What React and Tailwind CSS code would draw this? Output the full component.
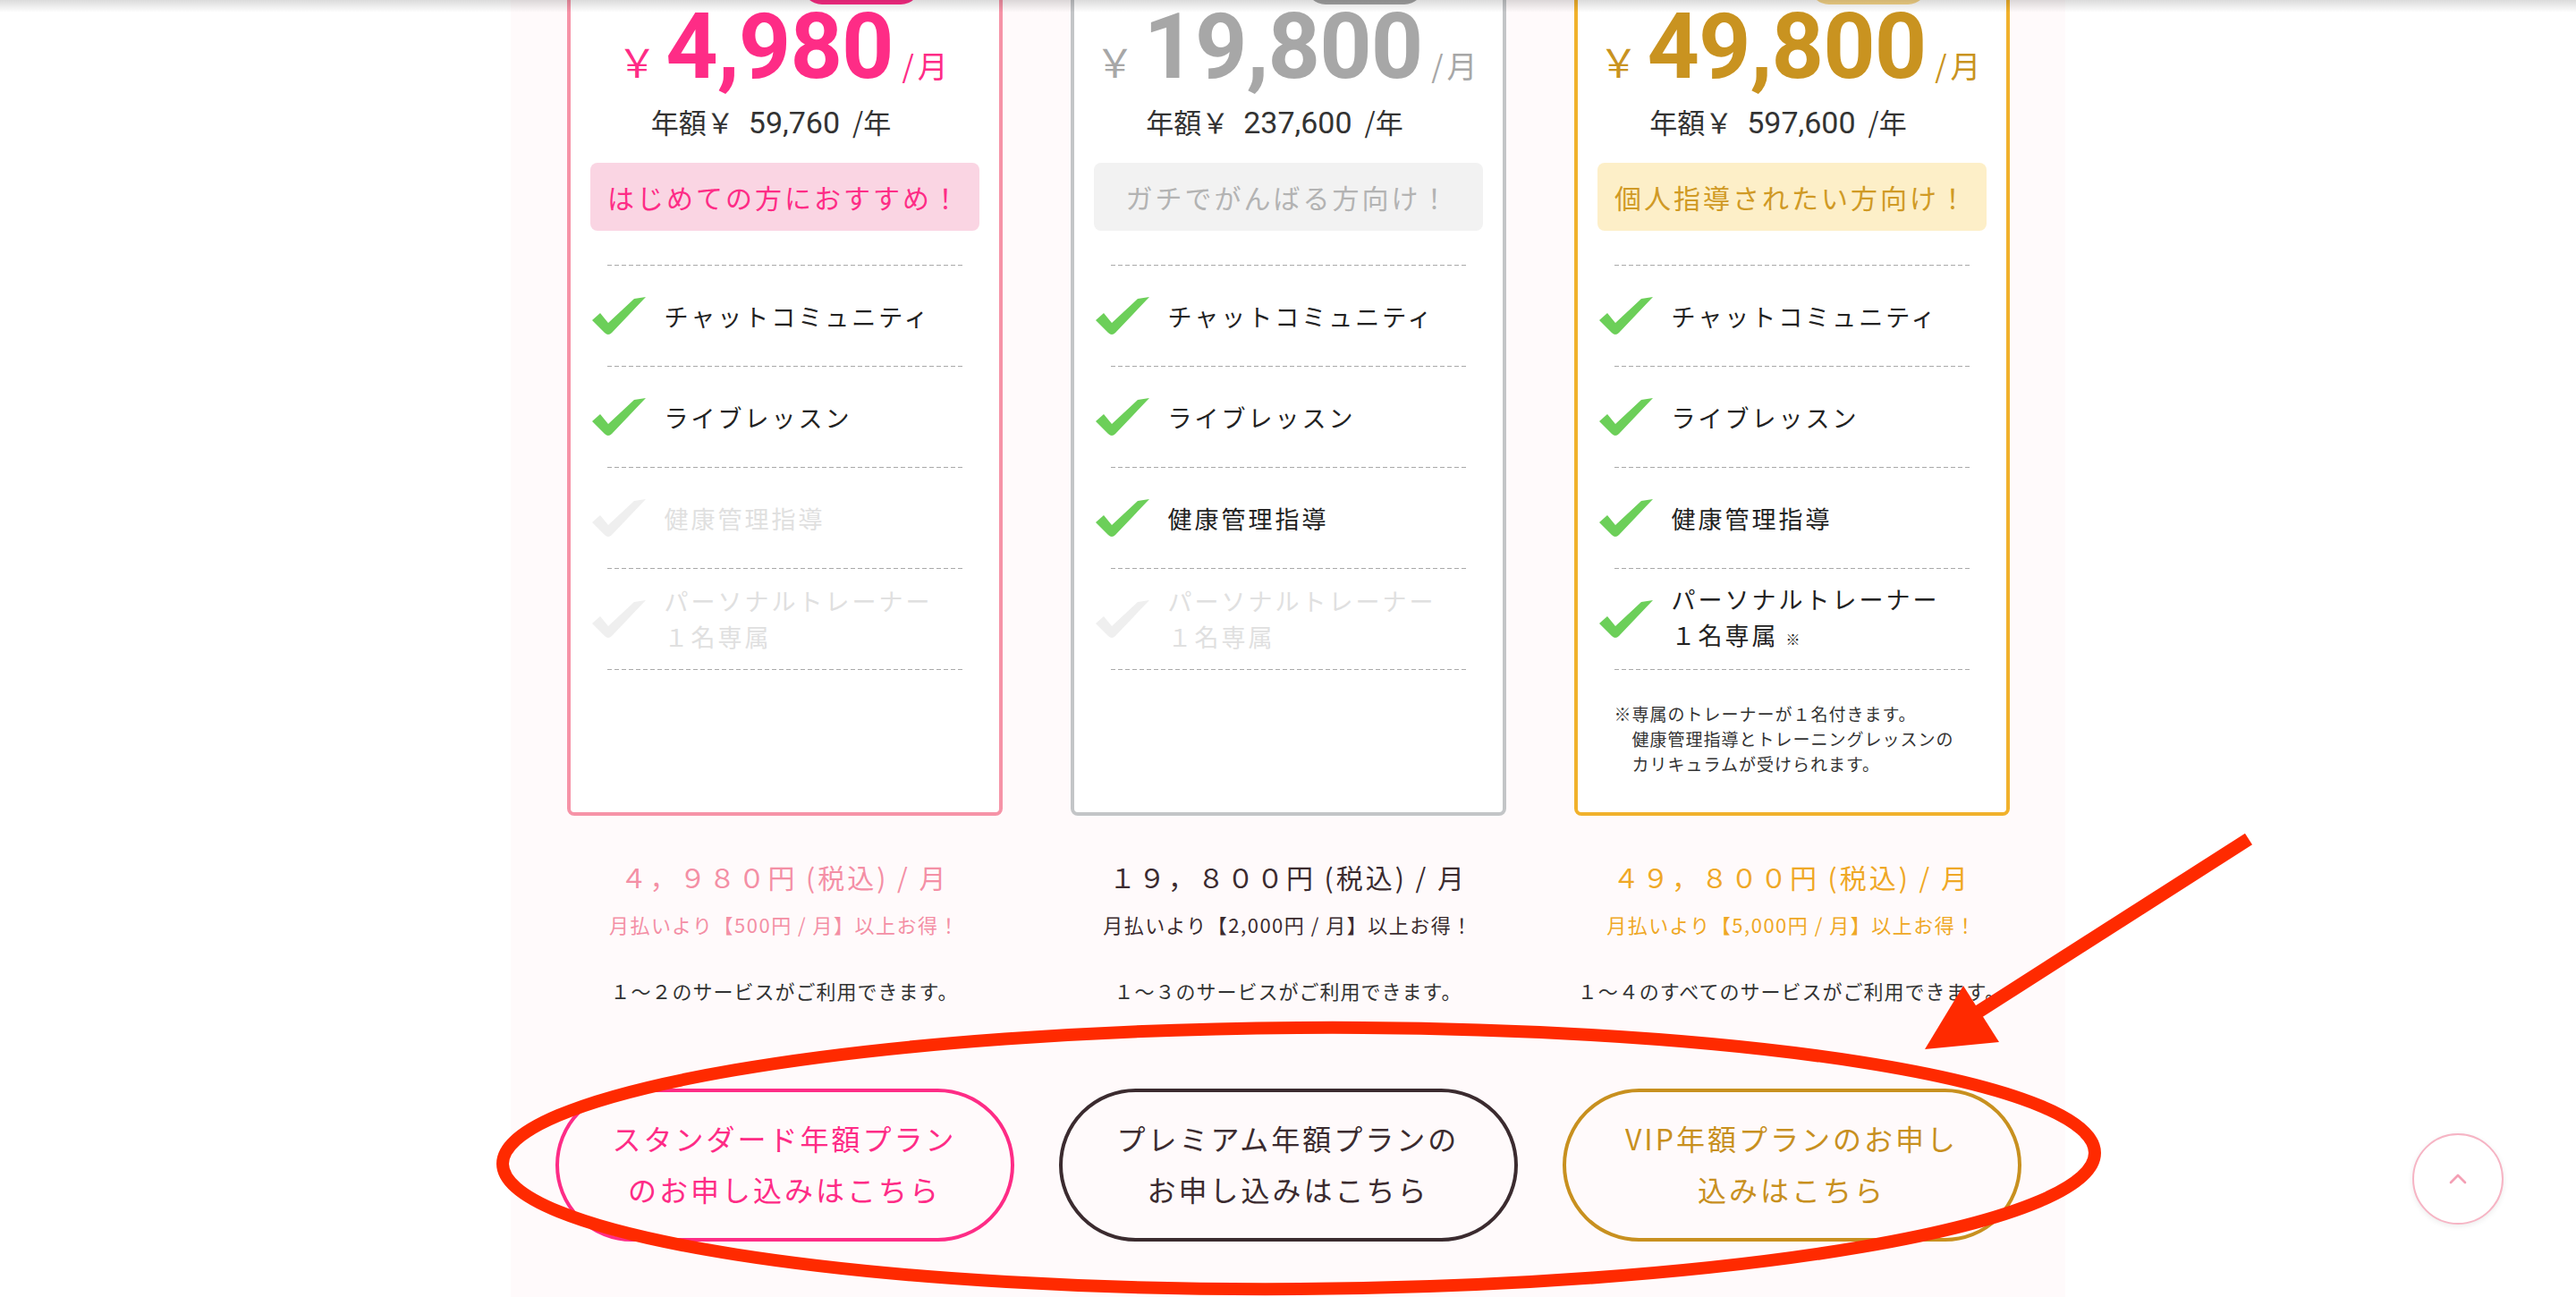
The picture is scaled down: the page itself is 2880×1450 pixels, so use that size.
import { ChevronUp } from 'lucide-react'

const PLANS = [
  {
    key: 'standard',
    oldPrice: '¥ 5,980',
    price: '4,980',
    annual: '59,760',
    badge: 'はじめての方におすすめ！',
    features: [true, true, false, false],
    monthly: '４，９８０円 (税込) / 月',
    save: '月払いより【500円 / 月】以上お得！',
    services: '１～２のサービスがご利用できます。',
    button: ['スタンダード年額プラン', 'のお申し込みはこちら'],
    cardBorder: 'border-[#f693a7]',
    pill: 'bg-[#fe2c86]',
    priceText: 'text-[#fe2c86]',
    badgeBox: 'bg-[#fad5e3] text-[#fe2c86]',
    subText: 'text-[#f48fa5]',
    btn: 'border-[#fe2c86] text-[#fe2c86]',
  },
  {
    key: 'premium',
    oldPrice: '¥ 24,800',
    price: '19,800',
    annual: '237,600',
    badge: 'ガチでがんばる方向け！',
    features: [true, true, true, false],
    monthly: '１９，８００円 (税込) / 月',
    save: '月払いより【2,000円 / 月】以上お得！',
    services: '１～３のサービスがご利用できます。',
    button: ['プレミアム年額プランの', 'お申し込みはこちら'],
    cardBorder: 'border-[#c3c5c7]',
    pill: 'bg-[#a3a3a3]',
    priceText: 'text-[#a7a7a7]',
    badgeBox: 'bg-[#f2f2f2] text-[#b3b3b3]',
    subText: 'text-[#3b2b2f]',
    btn: 'border-[#3b2b2f] text-[#3b2b2f]',
  },
  {
    key: 'vip',
    oldPrice: '¥ 55,000',
    price: '49,800',
    annual: '597,600',
    badge: '個人指導されたい方向け！',
    features: [true, true, true, true],
    monthly: '４９，８００円 (税込) / 月',
    save: '月払いより【5,000円 / 月】以上お得！',
    services: '１～４のすべてのサービスがご利用できます。',
    button: ['VIP年額プランのお申し', '込みはこちら'],
    cardBorder: 'border-[#f1b12c]',
    pill: 'bg-[#f5d487]',
    priceText: 'text-[#c99320]',
    badgeBox: 'bg-[#fdefc8] text-[#d09a25]',
    subText: 'text-[#efa826]',
    btn: 'border-[#c8901f] text-[#c8901f]',
    note: true,
  },
]

const FEATURES = ['チャットコミュニティ', 'ライブレッスン', '健康管理指導', 'パーソナルトレーナー']

function Check({ on }) {
  return (
    <svg width="60" height="44" viewBox="0 0 60 44" className="shrink-0">
      <path
        d="M0 27 L9 19 L18 30 L47 3 L60 1 L22 41 Q18 45 14 41 Z"
        fill={on ? '#6ccf59' : '#efefef'}
      />
    </svg>
  )
}

function Dashed() {
  return (
    <div className="mx-[19px] h-px bg-[linear-gradient(to_right,#a9a9a9_65%,transparent_0)] bg-[length:8px_1px]" />
  )
}

function FeatureRow({ label, on, last, withMark }) {
  return (
    <div className="h-[112px] flex items-center gap-[21px] pl-[2px]">
      <Check on={on} />
      <p
        className={`text-[27px] tracking-[3px] ${last ? 'leading-[40px]' : 'leading-none'} ${
          on ? 'text-[#222]' : 'text-[#e0e0e0]'
        }`}
      >
        {last ? (
          <>
            パーソナルトレーナー
            <br />
            １名専属
            {withMark && <span className="text-[16px] ml-[8px] tracking-normal">※</span>}
          </>
        ) : (
          label
        )}
      </p>
    </div>
  )
}

function PlanCard({ plan }) {
  return (
    <div className={`flex flex-col rounded-[8px] border-[4px] bg-white px-[22px] pt-[11px] pb-[40px] ${plan.cardBorder}`}>
      {/* old price + label pill (scrolled out of view) */}
      <div className="h-[70px] flex items-end justify-end gap-[20px] pr-[66px]">
        <span className="text-[22px] text-[#bbb] line-through mb-[16px]">{plan.oldPrice}</span>
        <span className={`w-[132px] h-[44px] rounded-full ${plan.pill}`} />
      </div>

      {/* price */}
      <div className={`-mx-[12px] h-[94px] leading-[94px] flex items-baseline justify-center whitespace-nowrap ${plan.priceText}`}>
        <span className="text-[44px] mr-[10px] shrink-0">￥</span>
        <span className="font-['Roboto',sans-serif] font-bold text-[102px] tracking-[-1px] shrink-0">{plan.price}</span>
        <span className="text-[34px] ml-[10px] tracking-[4px] shrink-0">/月</span>
      </div>

      <div className="mt-[17px] h-[40px] flex items-baseline justify-center pr-[30px] text-[#333] text-[31px] leading-[40px] whitespace-nowrap">
        <span>年額￥</span>
        <span className="font-['Roboto',sans-serif] text-[34px] ml-[16px]">{plan.annual}</span>
        <span className="ml-[14px]">/年</span>
      </div>

      <div className={`mt-[26px] h-[76px] rounded-[8px] flex items-center justify-center text-[30px] tracking-[3px] ${plan.badgeBox}`}>
        {plan.badge}
      </div>

      <div className="mt-[38px]">
        <Dashed />
        {FEATURES.map((f, i) => (
          <div key={f}>
            <FeatureRow label={f} on={plan.features[i]} last={i === 3} withMark={plan.note} />
            <Dashed />
          </div>
        ))}
      </div>

      {plan.note && (
        <div className="mt-[35px] pl-[19px] text-[19px] leading-[28px] tracking-[1px] text-[#333]">
          <p>※専属のトレーナーが１名付きます。</p>
          <p className="pl-[20px]">健康管理指導とトレーニングレッスンの</p>
          <p className="pl-[20px]">カリキュラムが受けられます。</p>
        </div>
      )}
    </div>
  )
}

export default function App() {
  return (
    <div className="relative w-[2880px] h-[1450px] overflow-hidden bg-white font-['Noto_Sans_CJK_JP',sans-serif]">
      <div className="mx-auto w-[1738px] bg-[#fffafb] -mt-[120px] pt-[40px] pb-[200px]">
        {/* Cards */}
        <div className="mx-auto w-fit grid grid-cols-[487px_487px_487px] gap-x-[76px]">
          {PLANS.map(p => <PlanCard key={p.key} plan={p} />)}
        </div>

        {/* Price summary */}
        <div className="mx-auto w-fit mt-[48px] grid grid-cols-[487px_487px_487px] gap-x-[76px] text-center">
          {PLANS.map(p => (
            <div key={p.key} className="flex flex-col items-center">
              <p className={`text-[30px] leading-[40px] tracking-[3px] whitespace-nowrap ${p.subText}`}>{p.monthly}</p>
              <p className={`mt-[17px] text-[22px] leading-[32px] tracking-[1.5px] whitespace-nowrap ${p.subText}`}>{p.save}</p>
              <p className="mt-[42px] text-[22px] leading-[32px] tracking-[1px] whitespace-nowrap text-[#333]">{p.services}</p>
            </div>
          ))}
        </div>

        {/* Apply buttons */}
        <div className="mt-[94px] flex justify-center gap-[50px]">
          {PLANS.map(p => (
            <button
              key={p.key}
              className={`w-[513px] h-[171px] rounded-full border-[4px] bg-transparent flex flex-col items-center justify-center pb-[4px] text-[32px] leading-[57px] tracking-[3px] ${p.btn}`}
            >
              <span>{p.button[0]}</span>
              <span>{p.button[1]}</span>
            </button>
          ))}
        </div>
      </div>

      {/* fixed header shadow */}
      <div className="absolute top-0 inset-x-0 h-[14px] bg-linear-to-b from-[#00000024] to-transparent" />

      {/* annotation */}
      <svg className="absolute left-0 top-0 pointer-events-none" width="2880" height="1450">
        <ellipse cx="1452" cy="1295" rx="890" ry="146" fill="none" stroke="#ff2a00" strokeWidth="14" transform="rotate(-0.4 1452 1295)" />
        <line x1="2514" y1="938" x2="2212" y2="1131" stroke="#ff2a00" strokeWidth="15" />
        <polygon points="2152,1173 2195,1102 2235,1165" fill="#ff2a00" />
      </svg>

      {/* back to top */}
      <button className="absolute left-[2697px] top-[1267px] w-[102px] h-[102px] rounded-full border-2 border-[#f6b4c4] bg-white shadow-[0_2px_6px_rgba(0,0,0,0.08)] flex items-center justify-center">
        <ChevronUp size={32} strokeWidth={2} color="#f4a0b5" />
      </button>
    </div>
  )
}
